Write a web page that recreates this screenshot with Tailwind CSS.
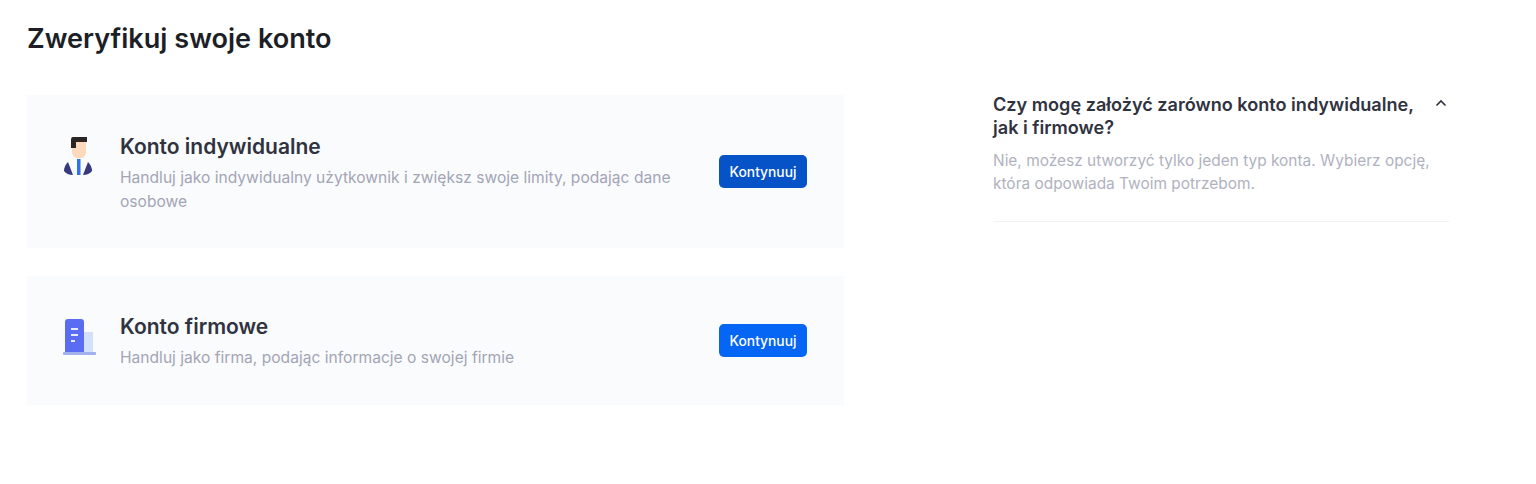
<!DOCTYPE html>
<html lang="pl">

<head>
  <meta charset="UTF-8">
  <meta name="viewport" content="width=device-width, initial-scale=1.0">
  <title>Zweryfikuj swoje konto</title>
  <script src="https://cdn.jsdelivr.net/npm/@tailwindcss/browser@4"></script>
</head>

<body class="bg-white h-[484px] overflow-hidden font-['Inter','Noto_Sans',sans-serif]">
  <div class="pl-[27px] pt-[20px]">
    <h1 class="text-[27.1px] leading-[36px] font-semibold text-[#1c1f26] pt-[1px] -mb-[1px]">Zweryfikuj swoje konto</h1>

    <div class="flex mt-[39px]">
      <!-- Cards -->
      <div class="w-[817px] flex flex-col gap-[28px]">
        <div class="h-[153px] bg-[#fafbfd] flex items-center pl-[33px] pr-[37px]">
          <svg class="w-[36px] h-[44px] shrink-0 mb-[29px]" viewBox="60 135 36 44">
            <path d="M72 142h14v10q0 5-4 6h-5q-4-1-5-5z" fill="#fdd9bd" />
            <path d="M73 137h14v5H76v6h-5v-8q0-3 2-3z" fill="#2b2526" />
            <path d="M68 162l5 13q-6 0-9-4q0-5 4-9z" fill="#38387f" />
            <path d="M88 162l-5 13q6 0 9-4q0-5-4-9z" fill="#38387f" />
            <rect x="77" y="159" width="3.500" height="16" fill="#2f73ea" />
          </svg>
          <div class="ml-[24px] flex-1">
            <h2 class="text-[21px] leading-[28px] font-semibold text-[#30333f] mt-[3px]">Konto indywidualne</h2>
            <p class="mt-[5px] w-[570px] text-[15.6px] leading-[24px] text-[#a3a5b5]">Handluj jako indywidualny użytkownik i zwiększ swoje limity, podając dane osobowe</p>
          </div>
          <button class="w-[88px] h-[33px] pt-[2px] rounded-[5px] bg-[#0553c7] text-white text-[13.8px] font-medium">Kontynuuj</button>
        </div>

        <div class="h-[129px] bg-[#fafbfd] flex items-center pl-[33px] pr-[37px]">
          <svg class="w-[36px] h-[44px] shrink-0 mb-[7px]" viewBox="60 315 36 44">
            <rect x="84" y="332" width="9" height="20" fill="#d3e0f8" />
            <path d="M65 322q0-3 3-3h13q3 0 3 3v30H65z" fill="#5a6df2" />
            <rect x="63" y="352" width="33" height="3" rx="1" fill="#a3b1ee" />
            <rect x="71" y="328" width="7" height="2" fill="#e6ebff" />
            <rect x="71" y="334" width="7" height="2" fill="#e6ebff" />
            <rect x="71" y="340" width="4" height="2" fill="#e6ebff" />
          </svg>
          <div class="ml-[24px] flex-1">
            <h2 class="text-[21px] leading-[28px] font-semibold text-[#30333f] mt-[3px]">Konto firmowe</h2>
            <p class="mt-[4px] text-[15.6px] leading-[26px] text-[#a3a5b5]">Handluj jako firma, podając informacje o swojej firmie</p>
          </div>
          <button class="w-[88px] h-[33px] pt-[2px] rounded-[5px] bg-[#0565f5] text-white text-[13.8px] font-medium">Kontynuuj</button>
        </div>
      </div>

      <!-- FAQ -->
      <div class="ml-[149px] w-[456px] h-[127px] border-b border-[#f1f2f4]">
        <div class="flex justify-between items-start">
          <h3 class="w-[432px] text-[18.1px] leading-[23px] font-semibold text-[#30333f] -mt-[2px]">Czy mogę założyć zarówno konto indywidualne, jak i firmowe?</h3>
          <svg class="w-[12px] h-[8px] mt-[4px] mr-[2px]" viewBox="0 0 12 8" fill="none" stroke="#30333f" stroke-width="1.600">
            <path d="M1.500 6.500L6 2l4.500 4.500" />
          </svg>
        </div>
        <p class="mt-[10px] text-[15.45px] leading-[23px] text-[#b0b2c0]">Nie, możesz utworzyć tylko jeden typ konta. Wybierz opcję, która odpowiada Twoim potrzebom.</p>
      </div>
    </div>
  </div>
</body>

</html>
